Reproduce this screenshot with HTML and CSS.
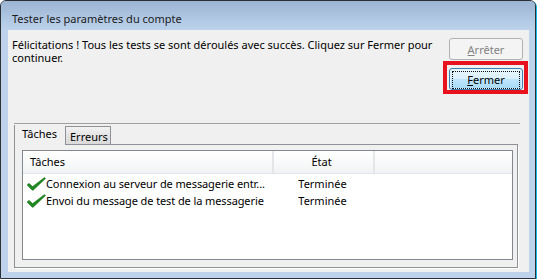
FILE: index.html
```html
<!DOCTYPE html>
<html lang="fr">
<head>
    <meta charset="UTF-8" />
    <title>Tester les paramètres du compte</title>
    <link rel="stylesheet" href="styles.css">
</head>
<body>
    <div class="window">
        <div class="titlebar">Tester les paramètres du compte</div>
        <div class="client">
            <div class="top">
                <p class="message">Félicitations ! Tous les tests se sont déroulés avec succès. Cliquez sur Fermer pour continuer.</p>
                <div class="actions">
                    <button class="btn" disabled><u>A</u>rrêter</button>
                    <div class="highlight">
                        <button class="btn btn-default"><span class="focus"><u>F</u>ermer</span></button>
                    </div>
                </div>
            </div>
            <div class="tabs">
                <div class="tabstrip">
                    <div class="tab active">Tâches</div>
                    <div class="tab">Erreurs</div>
                    <div class="tab-fill"></div>
                </div>
                <div class="tabpage">
                    <div class="listview">
                        <div class="lv-head">
                            <div class="col col-name">Tâches</div>
                            <div class="col col-state">État</div>
                            <div class="col"></div>
                        </div>
                        <div class="lv-row">
                            <div class="col col-name">
                                <svg class="check" width="19" height="14" viewBox="0 0 19 14"><polygon points="0,8 2,6.3 5.6,9.6 17.4,0.6 18.6,1.6 6.2,13.2 5.2,13.2" /></svg>
                                Connexion au serveur de messagerie entr...
                            </div>
                            <div class="col col-state">Terminée</div>
                            <div class="col"></div>
                        </div>
                        <div class="lv-row">
                            <div class="col col-name">
                                <svg class="check" width="19" height="14" viewBox="0 0 19 14"><polygon points="0,8 2,6.3 5.6,9.6 17.4,0.6 18.6,1.6 6.2,13.2 5.2,13.2" /></svg>
                                Envoi du message de test de la messagerie
                            </div>
                            <div class="col col-state">Terminée</div>
                            <div class="col"></div>
                        </div>
                    </div>
                </div>
            </div>
        </div>
    </div>
</body>
</html>
```

FILE: styles.css
```css
body {
    margin: 0;
    background-color: #ffffff;
    font-family: "Noto Sans", Arial, sans-serif;
    font-size: 11px;
    color: #000000;
}
.window {
    width: 536px;
    height: 279px;
    box-sizing: border-box;
    border: 1px solid #2b2f36;
    border-radius: 6px 6px 0 0;
    background-color: #bed3eb;
    box-shadow: 1px 1px 0 #18b8e8;
    padding: 0 6px 6px 7px;
    display: flex;
    flex-direction: column;
}
.titlebar {
    height: 29px;
    box-sizing: border-box;
    margin: 0 -6px 0 -7px;
    padding: 10px 0 0 11px;
    line-height: 15px;
    color: #1b1b1b;
    border-radius: 5px 5px 0 0;
    background: linear-gradient(#9bb4d2, #b3cae5 70%, #bcd2eb);
}
.client {
    flex: 1;
    background-color: #f0f0f0;
    display: flex;
    flex-direction: column;
}
.top {
    display: flex;
    padding: 8px 1px 0 4px;
}
.message {
    flex: 1;
    margin: 0;
    line-height: 13px;
}
.actions {
    display: flex;
    flex-direction: column;
    align-items: flex-end;
}
.btn {
    width: 74px;
    height: 22px;
    padding: 0;
    font-family: inherit;
    font-size: 11px;
    border: 1px solid #707070;
    border-radius: 3px;
    background: linear-gradient(#f2f2f2, #ebebeb 50%, #dddddd 50%, #cfcfcf);
    color: #000000;
}
.btn[disabled] {
    margin-right: 5px;
    border-color: #adb2b5;
    background: #f4f4f4;
    color: #838383;
}
.highlight {
    margin-top: 1px;
    border: 4px solid #e8111e;
    padding: 3px 1px 0 2px;
}
.btn-default {
    display: block;
    border-color: #3c7fb1;
    box-shadow: inset 0 0 0 1px #dff2fc;
    background: linear-gradient(#eaf6fd, #d9f0fc 50%, #bee6fd 50%, #a7d9f5);
    padding: 2px;
}
.focus {
    display: block;
    height: 16px;
    line-height: 15px;
    border: 1px dotted #101010;
}
.tabs {
    margin: 29px 9px 0 6px;
    border-top: 1px solid #a0a0a0;
}
.tabstrip {
    display: flex;
    align-items: flex-end;
    margin-right: 2px;
}
.tab {
    width: 46px;
    height: 19px;
    box-sizing: border-box;
    border: 1px solid #8e9196;
    background: linear-gradient(#f3f3f3, #e3e3e3 50%, #d9d9d9);
    padding: 3px 0 0 4px;
    line-height: 14px;
}
.tab.active {
    width: 51px;
    height: 20px;
    border: none;
    border-left: 1px solid #8e9196;
    background: #f0f0f0;
    padding: 2px 0 0 7px;
}
.tab-fill {
    flex: 1;
    height: 20px;
    border-bottom: 1px solid #8e9196;
}
.tabpage {
    margin-right: 2px;
    height: 123px;
    box-sizing: border-box;
    border: 1px solid #8e9196;
    border-top: none;
    box-shadow: 1px 1px 0 #ffffff;
    padding: 5px 4px 7px 7px;
}
.listview {
    height: 110px;
    box-sizing: border-box;
    border: 1px solid #828790;
    background-color: #ffffff;
}
.lv-head, .lv-row {
    display: grid;
    grid-template-columns: 251px 101px 1fr;
}
.lv-head {
    height: 23px;
    box-sizing: border-box;
    border-bottom: 1px solid #e2e5ea;
    background: linear-gradient(#ffffff, #f7f8f9 60%, #f1f2f4);
    line-height: 22px;
    margin-bottom: 2px;
}
.lv-head .col-name, .lv-head .col-state {
    border-right: 2px solid #e4e6ea;
}
.lv-head .col-name {
    padding-left: 7px;
}
.col-state {
    text-align: center;
    padding-right: 4px;
}
.lv-row {
    height: 17px;
    line-height: 16px;
}
.lv-row .col-name {
    display: flex;
    align-items: flex-start;
    white-space: nowrap;
    overflow: hidden;
    padding-left: 4px;
    letter-spacing: -0.1px;
}
.check {
    fill: #1f8a1f;
    stroke: #0e5e0e;
    stroke-width: 0.4;
    margin: 1px 0 0 0;
    flex: none;
}
```
